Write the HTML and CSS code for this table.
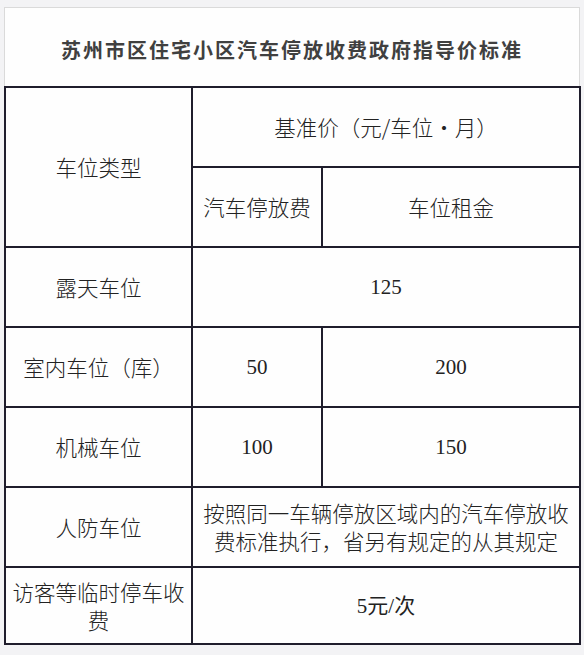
FILE: index.html
```html
<!DOCTYPE html>
<html lang="zh">
<head>
<meta charset="utf-8">
<link rel="stylesheet" href="styles.css">
</head>
<body>
<div class="page">
  <div class="title">苏州市区住宅小区汽车停放收费政府指导价标准</div>
  <table class="grid">
    <colgroup>
      <col class="c1"><col class="c2"><col class="c3">
    </colgroup>
    <tr>
      <td rowspan="2">车位类型</td>
      <td colspan="2">基准价（元/车位・月）</td>
    </tr>
    <tr>
      <td>汽车停放费</td>
      <td>车位租金</td>
    </tr>
    <tr>
      <td>露天车位</td>
      <td colspan="2" class="num">125</td>
    </tr>
    <tr>
      <td>室内车位（库）</td>
      <td class="num">50</td>
      <td class="num">200</td>
    </tr>
    <tr>
      <td>机械车位</td>
      <td class="num">100</td>
      <td class="num">150</td>
    </tr>
    <tr>
      <td>人防车位</td>
      <td colspan="2">按照同一车辆停放区域内的汽车停放收费标准执行，省另有规定的从其规定</td>
    </tr>
    <tr class="last">
      <td>访客等临时停车收费</td>
      <td colspan="2" class="num">5元/次</td>
    </tr>
  </table>
</div>
</body>
</html>
```

FILE: styles.css
```css
html, body {
  margin: 0;
  padding: 0;
  background: #f3f3f5;
}
.page {
  padding: 7px 0 0 4px;
  width: 576px;
}
.title {
  box-sizing: border-box;
  width: 576px;
  height: 79px;
  border: 1px solid #dadada;
  border-bottom: none;
  background: #fefefe;
  display: flex;
  align-items: center;
  justify-content: center;
  font-family: "Noto Sans CJK SC", sans-serif;
  font-weight: 700;
  font-size: 20px;
  letter-spacing: 2px;
  color: #404040;
  padding-top: 4px;
}
.grid {
  border-collapse: collapse;
  width: 575px;
  table-layout: fixed;
  background: #fefefe;
  font-family: "Noto Sans CJK SC", sans-serif;
  font-weight: 300;
  font-size: 21.5px;
  line-height: 28px;
  color: #222;
}
.c1 { width: 187px; }
.c2 { width: 130px; }
.c3 { width: 258px; }
.grid td {
  border: 2px solid #1f1d2c;
  height: 78px;
  padding: 0 2px;
  text-align: center;
  vertical-align: middle;
}
.grid tr.last td {
  height: 75px;
}
.grid td.num {
  font-family: "Liberation Serif", "Noto Sans CJK SC", serif;
  font-weight: 400;
  font-size: 21px;
}
```
